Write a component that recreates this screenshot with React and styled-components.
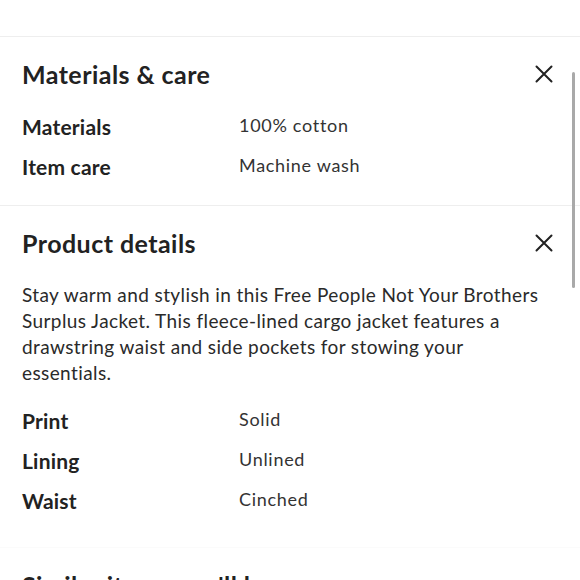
import React from 'react'
import styled, { createGlobalStyle } from 'styled-components'

const GlobalStyle = createGlobalStyle`
  html, body {
    margin: 0;
    padding: 0;
    background: #ffffff;
  }

  body {
    font-family: Lato, 'Noto Sans', sans-serif;
    color: #222222;
  }
`

const Page = styled.div`
  position: relative;
  width: 580px;
  height: 580px;
  overflow: hidden;
  background: #ffffff;
`

const TopBar = styled.div`
  height: 36px;
`

const Section = styled.section`
  border-top: 1px solid ${props => props.$faint ? '#fbfbfb' : '#eeeeee'};
  padding: 22px 26px ${props => props.$bottom || 18}px 22px;
`

const Header = styled.div`
  display: flex;
  align-items: center;
  justify-content: space-between;
  height: 30px;
`

const Title = styled.h2`
  margin: 0;
  font-size: 25px;
  font-weight: 700;
  letter-spacing: 0.45px;
  color: #222222;
`

const CloseButton = styled.button`
  display: flex;
  align-items: center;
  justify-content: center;
  width: 20px;
  height: 20px;
  padding: 0;
  border: none;
  background: none;
`

const Description = styled.p`
  margin: 24px 0 15px;
  font-size: 19px;
  line-height: 26px;
  color: #2a2a2a;
  letter-spacing: 0.4px;
`

const Specs = styled.dl`
  margin: ${props => props.$top || 0}px 0 0;
  display: grid;
  grid-template-columns: 217px 1fr;
  grid-auto-rows: 40px;
  align-items: center;
`

const Label = styled.dt`
  font-size: 21px;
  font-weight: 700;
  letter-spacing: 0.2px;
  color: #222222;
  transform: translateY(-1px);
`

const Value = styled.dd`
  margin: 0;
  font-size: 18px;
  color: #333333;
  letter-spacing: 0.7px;
  transform: translateY(-2px);
`

const ScrollThumb = styled.div`
  position: absolute;
  top: 72px;
  right: 5px;
  width: 3px;
  height: 216px;
  border-radius: 2px;
  background: #a9a9a9;
`

function CloseIcon() {
  return (
    <svg width='18' height='18' viewBox='0 0 18 18'>
      <path d='M1.5 1.5 L16.5 16.5 M16.5 1.5 L1.5 16.5' stroke='#222' strokeWidth='2' strokeLinecap='round' />
    </svg>
  )
}

function SpecList({ items, top }) {
  return (
    <Specs $top={top}>
      {items.map(([label, value]) => (
        <React.Fragment key={label}>
          <Label>{label}</Label>
          <Value>{value}</Value>
        </React.Fragment>
      ))}
    </Specs>
  )
}

function SectionHeader({ title }) {
  return (
    <Header>
      <Title>{title}</Title>
      <CloseButton aria-label='Close'>
        <CloseIcon />
      </CloseButton>
    </Header>
  )
}

export default function App() {
  return (
    <Page>
      <GlobalStyle />
      <TopBar />
      <Section>
        <SectionHeader title='Materials & care' />
        <SpecList
          top={18}
          items={[
            ['Materials', '100% cotton'],
            ['Item care', 'Machine wash']
          ]}
        />
      </Section>
      <Section $bottom={26}>
        <SectionHeader title='Product details' />
        <Description>
          Stay warm and stylish in this Free People Not Your Brothers Surplus Jacket. This fleece-lined cargo jacket features a drawstring waist and side pockets for stowing your essentials.
        </Description>
        <SpecList
          items={[
            ['Print', 'Solid'],
            ['Lining', 'Unlined'],
            ['Waist', 'Cinched']
          ]}
        />
      </Section>
      <Section $faint>
        <Header>
          <Title>Similar items you'll love</Title>
        </Header>
      </Section>
      <ScrollThumb />
    </Page>
  )
}
